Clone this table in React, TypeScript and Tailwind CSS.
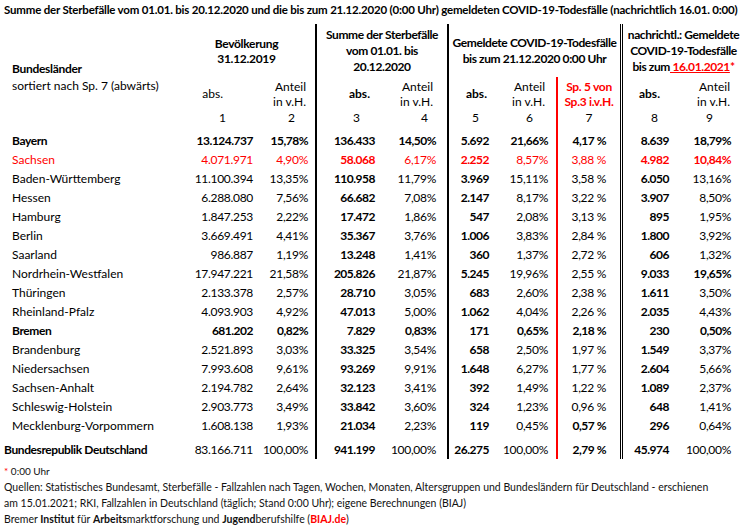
import React from "react";

type Row = {
  name: string;
  v: string[];
  bold?: boolean[];
  nameBold?: boolean;
  red?: boolean;
};

// columns 3, 5, 8 (index 2, 4, 7) are always bold
const base = [false, false, true, false, true, false, false, true, false];
const all = Array(9).fill(true);
const withBold = (...idx: number[]) => base.map((b, i) => b || idx.includes(i));

const rows: Row[] = [
  { name: "Bayern", nameBold: true, bold: all, v: ["13.124.737", "15,78%", "136.433", "14,50%", "5.692", "21,66%", "4,17 %", "8.639", "18,79%"] },
  { name: "Sachsen", red: true, bold: withBold(8), v: ["4.071.971", "4,90%", "58.068", "6,17%", "2.252", "8,57%", "3,88 %", "4.982", "10,84%"] },
  { name: "Baden-Württemberg", v: ["11.100.394", "13,35%", "110.958", "11,79%", "3.969", "15,11%", "3,58 %", "6.050", "13,16%"] },
  { name: "Hessen", v: ["6.288.080", "7,56%", "66.682", "7,08%", "2.147", "8,17%", "3,22 %", "3.907", "8,50%"] },
  { name: "Hamburg", v: ["1.847.253", "2,22%", "17.472", "1,86%", "547", "2,08%", "3,13 %", "895", "1,95%"] },
  { name: "Berlin", v: ["3.669.491", "4,41%", "35.367", "3,76%", "1.006", "3,83%", "2,84 %", "1.800", "3,92%"] },
  { name: "Saarland", v: ["986.887", "1,19%", "13.248", "1,41%", "360", "1,37%", "2,72 %", "606", "1,32%"] },
  { name: "Nordrhein-Westfalen", bold: withBold(8), v: ["17.947.221", "21,58%", "205.826", "21,87%", "5.245", "19,96%", "2,55 %", "9.033", "19,65%"] },
  { name: "Thüringen", v: ["2.133.378", "2,57%", "28.710", "3,05%", "683", "2,60%", "2,38 %", "1.611", "3,50%"] },
  { name: "Rheinland-Pfalz", v: ["4.093.903", "4,92%", "47.013", "5,00%", "1.062", "4,04%", "2,26 %", "2.035", "4,43%"] },
  { name: "Bremen", nameBold: true, bold: all, v: ["681.202", "0,82%", "7.829", "0,83%", "171", "0,65%", "2,18 %", "230", "0,50%"] },
  { name: "Brandenburg", v: ["2.521.893", "3,03%", "33.325", "3,54%", "658", "2,50%", "1,97 %", "1.549", "3,37%"] },
  { name: "Niedersachsen", v: ["7.993.608", "9,61%", "93.269", "9,91%", "1.648", "6,27%", "1,77 %", "2.604", "5,66%"] },
  { name: "Sachsen-Anhalt", v: ["2.194.782", "2,64%", "32.123", "3,41%", "392", "1,49%", "1,22 %", "1.089", "2,37%"] },
  { name: "Schleswig-Holstein", v: ["2.903.773", "3,49%", "33.842", "3,60%", "324", "1,23%", "0,96 %", "648", "1,41%"] },
  { name: "Mecklenburg-Vorpommern", bold: withBold(6), v: ["1.608.138", "1,93%", "21.034", "2,23%", "119", "0,45%", "0,57 %", "296", "0,64%"] },
];

const total: Row = {
  name: "Bundesrepublik Deutschland",
  nameBold: true,
  bold: withBold(6),
  v: ["83.166.711", "100,00%", "941.199", "100,00%", "26.275", "100,00%", "2,79 %", "45.974", "100,00%"],
};

const grid = "grid grid-cols-[200px_58px_57px_67px_65px_47px_62px_64px_54px_70px]";

// per value column: padding + divider
const cellCls = [
  "pr-[5px]",
  "pr-[7px]",
  "pr-[7px] border-l-2 border-black",
  "pr-[11px]",
  "pr-[5px] border-l-2 border-black",
  "pr-[8px]",
  "pr-[14px] border-l-2 border-[#ff0000]",
  "pr-[5px] border-l-[3px] border-double border-black",
  "pr-[13px]",
];

function DataRow({ row, total: isTotal }: { row: Row; total?: boolean }) {
  const bold = row.bold ?? base;
  return (
    <div className={`${grid} ${isTotal ? "h-[24px]" : "h-[19px]"} ${row.red ? "text-[#ff0000]" : "text-black"}`}>
      <div
        className={`flex items-center whitespace-nowrap ${isTotal ? "pl-[4px] pt-[5px]" : "pl-[12px]"} ${
          row.nameBold ? "font-bold tracking-[-0.4px]" : ""
        }`}
      >
        {row.name}
      </div>
      {row.v.map((val, i) => (
        <div
          key={i}
          className={`flex items-center justify-end ${isTotal ? "pt-[5px]" : ""} ${cellCls[i]} ${
            bold[i] ? "font-bold tracking-[-0.5px]" : "tracking-[-0.3px]"
          }`}
        >
          {val}
        </div>
      ))}
    </div>
  );
}

export default function App() {
  return (
    <div className="w-[744px] h-[526px] bg-white text-black font-['Lato',sans-serif] text-[12px] overflow-hidden">
      <div className="h-[24px] pl-[4px] pt-[2px] text-[11.5px] font-bold tracking-[-0.2px] leading-[15px] whitespace-nowrap">
        Summe der Sterbefälle vom 01.01. bis 20.12.2020 und die bis zum 21.12.2020 (0:00 Uhr) gemeldeten COVID-19-Todesfälle (nachrichtlich 16.01. 0:00)
      </div>

      {/* header */}
      <div className={`${grid} grid-rows-[53px_33px_21px] leading-[15px]`}>
        <div className="row-span-3 pl-[12px] pt-[36px] leading-[17px] whitespace-nowrap">
          <div className="font-bold tracking-[-0.3px]">Bundesländer</div>
          <div>sortiert nach Sp. 7 (abwärts)</div>
        </div>
        <div className="col-span-2 flex flex-col items-center justify-center pr-[22px] font-bold tracking-[-0.3px]">
          <span>Bevölkerung</span>
          <span>31.12.2019</span>
        </div>
        <div className="col-span-2 flex flex-col items-center justify-center border-l-2 border-black font-bold tracking-[-0.4px] leading-[16px] whitespace-nowrap">
          <span>Summe der Sterbefälle</span>
          <span>vom 01.01. bis</span>
          <span>20.12.2020</span>
        </div>
        <div className="col-span-3 flex flex-col items-center justify-center border-l-2 border-black font-bold tracking-[-0.4px] leading-[16px] whitespace-nowrap">
          <span>Gemeldete COVID-19-Todesfälle</span>
          <span>bis zum 21.12.2020 0:00 Uhr</span>
        </div>
        <div className="col-span-2 flex flex-col items-center justify-center border-l-[3px] border-double border-black font-bold tracking-[-0.4px] leading-[16px] whitespace-nowrap">
          <span>nachrichtl.: Gemeldete</span>
          <span>COVID-19-Todesfälle</span>
          <span>
            bis zum<span className="text-[#ff0000] underline"> 16.01.2021</span>
            <span className="text-[#ff0000]">*</span>
          </span>
        </div>

        {/* sub headers */}
        <div className="flex items-center justify-end pr-[35px]">abs.</div>
        <div className="flex flex-col items-end justify-center pr-[9px]">
          <span>Anteil</span>
          <span>in v.H.</span>
        </div>
        <div className="flex items-center justify-end pr-[12px] border-l-2 border-black font-bold">abs.</div>
        <div className="flex flex-col items-end justify-center pr-[14px]">
          <span>Anteil</span>
          <span>in v.H.</span>
        </div>
        <div className="flex items-center justify-end pr-[7px] border-l-2 border-black font-bold">abs.</div>
        <div className="flex flex-col items-end justify-center pr-[11px]">
          <span>Anteil</span>
          <span>in v.H.</span>
        </div>
        <div className="flex flex-col items-center justify-center border-l-2 border-[#ff0000] text-[#ff0000] font-bold tracking-[-0.3px] whitespace-nowrap">
          <span>Sp. 5 von</span>
          <span>Sp.3 i.v.H.</span>
        </div>
        <div className="flex items-center justify-end pr-[14px] border-l-[3px] border-double border-black font-bold">abs.</div>
        <div className="flex flex-col items-end justify-center pr-[14px]">
          <span>Anteil</span>
          <span>in v.H.</span>
        </div>

        {/* column numbers */}
        <div className="text-right pr-[32px]">1</div>
        <div className="text-right pr-[20px]">2</div>
        <div className="text-right pr-[22px] border-l-2 border-black">3</div>
        <div className="text-right pr-[19px]">4</div>
        <div className="text-right pr-[15px] border-l-2 border-black">5</div>
        <div className="text-right pr-[23px]">6</div>
        <div className="text-center border-l-2 border-[#ff0000]">7</div>
        <div className="text-right pr-[16px] border-l-[3px] border-double border-black">8</div>
        <div className="text-right pr-[31px]">9</div>
      </div>

      {rows.map((r) => (
        <DataRow key={r.name} row={r} />
      ))}
      <DataRow row={total} total />

      <div className="pl-[4px] pt-[4px] text-[10px] leading-[16px] text-[#111]">
        <div>
          <span className="text-[#ff0000]">*</span> 0:00 Uhr
        </div>
        <div className="text-[10.5px]">
          Quellen: Statistisches Bundesamt, Sterbefälle - Fallzahlen nach Tagen, Wochen, Monaten, Altersgruppen und Bundesländern für Deutschland - erschienen
        </div>
        <div className="text-[10.5px]">
          am 15.01.2021; RKI, Fallzahlen in Deutschland (täglich; Stand 0:00 Uhr); eigene Berechnungen (BIAJ)
        </div>
        <div className="text-[10.5px] leading-[17px]">
          Bremer <b>Institut</b> für <b>Arbeits</b>marktforschung und <b>Jugend</b>berufshilfe (
          <b className="text-[#ff0000]">BIAJ.de</b>)
        </div>
      </div>
    </div>
  );
}
